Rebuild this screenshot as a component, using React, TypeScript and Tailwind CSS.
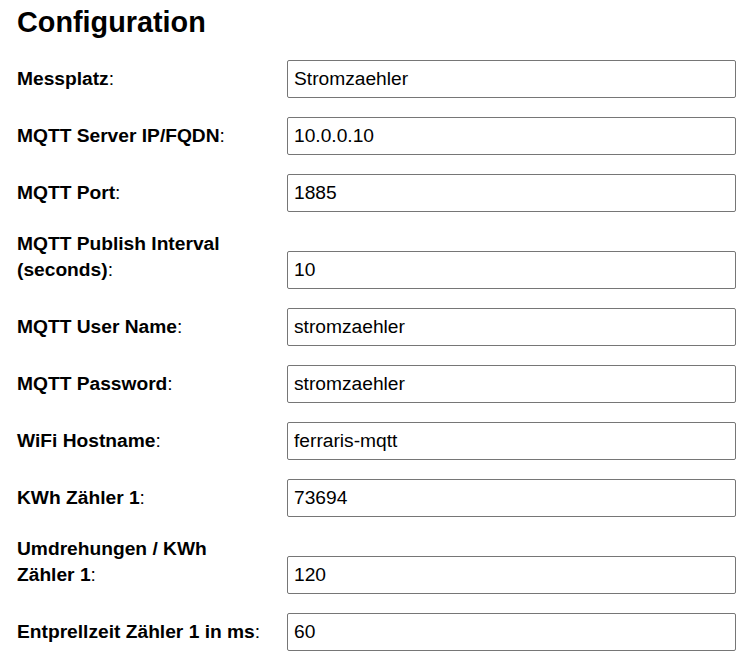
import { useState } from 'react';

type Field = {
  id: string;
  label: string;
  value: string;
};

const fields: Field[] = [
  { id: 'messplatz', label: 'Messplatz', value: 'Stromzaehler' },
  { id: 'mqttServer', label: 'MQTT Server IP/FQDN', value: '10.0.0.10' },
  { id: 'mqttPort', label: 'MQTT Port', value: '1885' },
  { id: 'mqttInterval', label: 'MQTT Publish Interval (seconds)', value: '10' },
  { id: 'mqttUser', label: 'MQTT User Name', value: 'stromzaehler' },
  { id: 'mqttPassword', label: 'MQTT Password', value: 'stromzaehler' },
  { id: 'hostname', label: 'WiFi Hostname', value: 'ferraris-mqtt' },
  { id: 'kwh1', label: 'KWh Zähler 1', value: '73694' },
  { id: 'rev1', label: 'Umdrehungen / KWh Zähler 1', value: '120' },
  { id: 'debounce1', label: 'Entprellzeit Zähler 1 in ms', value: '60' },
];

function ConfigRow({ field }: { field: Field }) {
  const [value, setValue] = useState(field.value);

  return (
    <div className="flex [align-items:last_baseline]">
      <label htmlFor={field.id} className="w-[270px] shrink-0 pr-[22px] leading-[26px]">
        <b>{field.label}</b>:
      </label>
      <input
        id={field.id}
        type="text"
        value={value}
        onChange={(e) => setValue(e.target.value)}
        className="flex-1 min-w-0 h-[38px] px-[6px] border border-[#767676] rounded-[2px] text-black leading-[22px] outline-none"
      />
    </div>
  );
}

export default function App() {
  return (
    <div className="min-h-screen bg-white text-black pl-[17px] pr-[10px] pt-[6px] font-['Liberation_Sans',Arial,sans-serif] text-[19.2px]">
      <h2 className="text-[28.8px] font-bold leading-[33px] mb-[21px]">Configuration</h2>
      <form className="flex flex-col gap-[19px]">
        {fields.map((f) => (
          <ConfigRow key={f.id} field={f} />
        ))}
      </form>
    </div>
  );
}
